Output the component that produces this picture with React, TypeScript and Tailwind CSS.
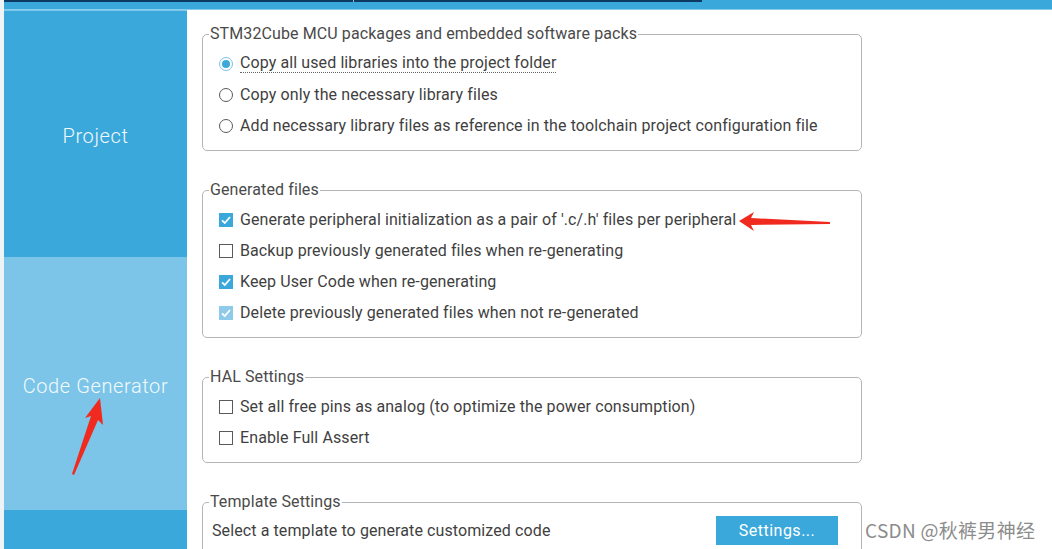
import React from "react";

type Option = { label: string; checked?: boolean; disabled?: boolean; focused?: boolean };

const packOptions: Option[] = [
  { label: "Copy all used libraries into the project folder", checked: true, focused: true },
  { label: "Copy only the necessary library files" },
  { label: "Add necessary library files as reference in the toolchain project configuration file" },
];

const generatedOptions: Option[] = [
  { label: "Generate peripheral initialization as a pair of '.c/.h' files per peripheral", checked: true },
  { label: "Backup previously generated files when re-generating" },
  { label: "Keep User Code when re-generating", checked: true },
  { label: "Delete previously generated files when not re-generated", checked: true, disabled: true },
];

const halOptions: Option[] = [
  { label: "Set all free pins as analog (to optimize the power consumption)" },
  { label: "Enable Full Assert" },
];

function Radio({ checked }: { checked?: boolean }) {
  return (
    <span
      className={`flex h-[14px] w-[14px] shrink-0 items-center justify-center rounded-full border bg-white ${
        checked ? "border-[#7cc3e6]" : "border-[#5a5a5a]"
      }`}
    >
      {checked && <span className="h-[8px] w-[8px] rounded-full bg-[#3aa8db]" />}
    </span>
  );
}

function Checkbox({ checked, disabled }: { checked?: boolean; disabled?: boolean }) {
  if (!checked) {
    return <span className="h-[14px] w-[14px] shrink-0 border border-[#5a5a5a] bg-white" />;
  }
  return (
    <span
      className={`flex h-[14px] w-[14px] shrink-0 items-center justify-center ${
        disabled ? "bg-[#8ecbea]" : "bg-[#3aa8db]"
      }`}
    >
      <svg viewBox="0 0 14 14" className="h-[14px] w-[14px]">
        <path d="M3 7.4 L5.8 10 L11 4" fill="none" stroke="white" strokeWidth="1.8" />
      </svg>
    </span>
  );
}

function Row({ opt, kind }: { opt: Option; kind: "radio" | "check" }) {
  return (
    <div className="flex h-[31px] items-center gap-[7px]">
      {kind === "radio" ? <Radio checked={opt.checked} /> : <Checkbox checked={opt.checked} disabled={opt.disabled} />}
      <span className={opt.focused ? "border-b border-dotted border-[#666] leading-[18px]" : "leading-[18px]"}>
        {opt.label}
      </span>
    </div>
  );
}

function Group({ title, children, pad = "pl-[16px]", legendShift = "-ml-[10px]" }: { title: string; children: React.ReactNode; pad?: string; legendShift?: string }) {
  return (
    <fieldset className={`w-[660px] rounded-[5px] border border-[#b3b6b9] pr-4 pb-[9px] pt-[5px] ${pad}`}>
      <legend className={`${legendShift} px-[1px] text-[16px] leading-[18px] tracking-[0.1px] text-[#4a4a4a]`}>{title}</legend>
      {children}
    </fieldset>
  );
}

export default function App() {
  return (
    <div className="relative flex h-[549px] w-[1052px] flex-col overflow-hidden bg-white font-['Roboto','Liberation_Sans',sans-serif] text-[16px] tracking-[0.1px] text-[#3f3f3f]">
      {/* top bar */}
      <div className="flex h-[10px] shrink-0">
        <div className="w-[4px] bg-[#eef3f6]" />
        <div className="flex flex-1 flex-col">
          <div className="flex h-[2px]">
            <div className="w-[349px] bg-[#0c3a63]" />
            <div className="w-px bg-[#9fb6c8]" />
            <div className="w-[348px] bg-[#0c3a63]" />
            <div className="flex-1 bg-[#3aa8db]" />
          </div>
          <div className="h-[7px] bg-[#3aa8db]" />
          <div className="h-px bg-[#86cdee]" />
        </div>
      </div>

      <div className="flex flex-1">
        <div className="w-[4px] bg-[#eef3f6]" />
        <aside className="flex w-[183px] shrink-0 flex-col border-t border-[#7fc7ea] font-light text-[20px] tracking-[0.6px] text-[#f2fafd]">
          <div className="flex h-[246px] items-center justify-center bg-[#3aa8db] pt-[4px]">Project</div>
          <div className="flex h-[253px] items-center justify-center bg-[#7cc5e8] pt-[4px]">Code Generator</div>
          <div className="flex-1 bg-[#3aa8db]" />
        </aside>

        <main className="flex flex-1 flex-col gap-[30px] pl-[15px] pt-[15px]">
          <Group title="STM32Cube MCU packages and embedded software packs">
            {packOptions.map((o) => (
              <Row key={o.label} opt={o} kind="radio" />
            ))}
          </Group>
          <Group title="Generated files">
            {generatedOptions.map((o) => (
              <Row key={o.label} opt={o} kind="check" />
            ))}
          </Group>
          <Group title="HAL Settings">
            {halOptions.map((o) => (
              <Row key={o.label} opt={o} kind="check" />
            ))}
          </Group>
          <Group title="Template Settings" pad="pl-[9px]" legendShift="-ml-[3px]">
            <div className="flex items-center">
              <span className="leading-[18px]">Select a template to generate customized code</span>
              <button className="ml-auto mr-[7px] h-[29px] w-[122px] bg-[#3aa8db] text-[16px] tracking-[0.5px] text-white">
                Settings...
              </button>
            </div>
            <div className="h-[40px]" />
          </Group>
        </main>
      </div>

      {/* annotation arrows */}
      <svg className="pointer-events-none absolute inset-0" width="1052" height="549" viewBox="0 0 1052 549">
        <polygon points="739,221 754,212 751,218 830,222 830,224 751,225 754,231" fill="#f02a1e" />
        <polygon points="100,398 103,425 98,420 74,475 72,474 91,416 85,418" fill="#f02a1e" />
      </svg>

      <div className="absolute left-[865px] top-[518px] font-['Noto_Sans_CJK_SC',sans-serif] text-[19px] leading-[24px] tracking-[0.3px] text-[#8c8c8c]">
        CSDN @秋裤男神经
      </div>
    </div>
  );
}
